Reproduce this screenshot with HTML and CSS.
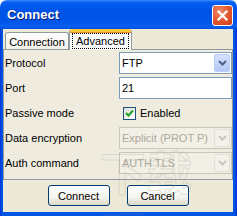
FILE: index.html
```html
<!DOCTYPE html>
<html>
<head>
<meta charset="utf-8">
<link rel="stylesheet" href="styles.css">
</head>
<body>
<div class="window">
  <div class="titlebar">
    <span class="title">Connect</span>
    <div class="close">
      <svg width="13" height="13" viewBox="0 0 13 13"><path d="M2.5 2.5 L10.5 10.5 M10.5 2.5 L2.5 10.5" stroke="#fff" stroke-width="2.2" stroke-linecap="square"/></svg>
    </div>
  </div>
  <div class="frame">
    <div class="client">
      <div class="tabs">
        <div class="tab">Connection</div>
        <div class="tab active"><span class="focus">Advanced</span></div>
      </div>
      <div class="panel">
        <div class="form">
          <span class="label">Protocol</span>
          <div class="combo"><span class="value">FTP</span><span class="arrow"><svg width="9" height="6" viewBox="0 0 9 6"><path d="M1 1 L4.5 4.5 L8 1" fill="none" stroke="#4D6185" stroke-width="2"/></svg></span></div>

          <span class="label">Port</span>
          <div class="input"><span class="value">21</span></div>

          <span class="label">Passive mode</span>
          <div class="check-row"><span class="checkbox"><svg width="11" height="11" viewBox="0 0 11 11"><path d="M2 5 L4.5 7.5 L9 2.5" fill="none" stroke="#21A121" stroke-width="2"/></svg></span><span class="check-text">Enabled</span></div>

          <span class="label">Data encryption</span>
          <div class="combo disabled"><span class="value">Explicit (PROT P)</span><span class="arrow"><svg width="9" height="6" viewBox="0 0 9 6"><path d="M1 1 L4.5 4.5 L8 1" fill="none" stroke="#C9C7BA" stroke-width="2"/></svg></span></div>

          <span class="label">Auth command</span>
          <div class="combo disabled"><span class="value">AUTH TLS</span><span class="arrow"><svg width="9" height="6" viewBox="0 0 9 6"><path d="M1 1 L4.5 4.5 L8 1" fill="none" stroke="#C9C7BA" stroke-width="2"/></svg></span></div>
        </div>
      </div>
      <div class="buttons">
        <div class="btn">Connect</div>
        <div class="btn">Cancel</div>
      </div>
    </div>
  </div>
  <div class="watermark">
    <span class="wm-big">下载吧</span>
    <span class="wm-url">www.xiazaiba.com</span>
  </div>
</div>
</body>
</html>
```

FILE: styles.css
```css
* { box-sizing: border-box; }
html, body { margin: 0; padding: 0; }
body {
  font-family: "Liberation Sans", Arial, sans-serif;
  font-size: 11px;
  color: #000;
  background: #fff;
}
.window {
  position: relative;
  width: 237px;
  height: 216px;
  display: flex;
  flex-direction: column;
  overflow: hidden;
}
.titlebar {
  height: 29px;
  flex: none;
  display: flex;
  align-items: flex-start;
  justify-content: space-between;
  padding: 5px 4px 0 7px;
  border-radius: 7px 7px 0 0;
  background: linear-gradient(to bottom, #3C8CF8 0px, #0A62F0 2px, #0058EE 5px, #0054E5 14px, #0056EA 22px, #0A5FF0 26px, #0050DE 29px);
}
.title {
  color: #fff;
  font-weight: bold;
  font-size: 13px;
  line-height: 20px;
  text-shadow: 1px 1px 0 #0A1E6E;
}
.close {
  width: 21px;
  height: 21px;
  border: 1px solid #fff;
  border-radius: 3px;
  background: radial-gradient(circle at 35% 30%, #F08A6A 0%, #E2552C 55%, #C83C18 100%);
  display: flex;
  align-items: center;
  justify-content: center;
}
.frame {
  flex: 1;
  display: flex;
  padding: 0 4px 4px 3px;
  background: linear-gradient(to right, #0831D9 0px, #0055E5 2px, #0055E5 234px, #0831D9 237px);
}
.client {
  flex: 1;
  background: #ECE9D8;
  display: flex;
  flex-direction: column;
}
.tabs {
  height: 20px;
  display: flex;
  align-items: flex-end;
  padding-left: 2px;
  position: relative;
  z-index: 1;
}
.tab {
  height: 17px;
  width: 64px;
  border: 1px solid #919B9C;
  border-bottom: none;
  border-radius: 3px 3px 0 0;
  background: linear-gradient(to bottom, #FFFFFF, #F3F1E9);
  display: flex;
  align-items: center;
  justify-content: center;
  padding-top: 1px;
}
.tab.active {
  height: 21px;
  width: 63px;
  margin-bottom: -1px;
  border-top: 3px solid #FFC83C;
  box-shadow: inset 0 1px 0 #E68B2C;
  background: #FCFCFE;
  padding-top: 0;
}
.focus {
  border: 1px dotted #000;
  height: 16px;
  width: 57px;
  display: flex;
  align-items: center;
  justify-content: center;
}
.panel {
  border: 1px solid #919B9C;
  background: #EFECDF;
  padding: 2px 0 5px 1px;
}
.form {
  display: grid;
  grid-template-columns: 114px 113px;
  grid-auto-rows: 22px;
  row-gap: 3px;
  align-items: center;
}
.combo, .input {
  height: 22px;
  background: #fff;
  border: 1px solid #7F9DB9;
  display: flex;
  align-items: center;
  justify-content: space-between;
  padding: 0 1px 0 2px;
}
.arrow {
  width: 16px;
  height: 18px;
  border: 1px solid #B9CDF9;
  border-radius: 2px;
  background: linear-gradient(to bottom, #D5E1FD, #B4C8F6);
  display: flex;
  align-items: center;
  justify-content: center;
}
.combo.disabled {
  background: #F2F0E6;
  border-color: #C9C7BA;
  color: #ACA899;
}
.combo.disabled .arrow {
  background: #F3F1EA;
  border-color: #E2E0D6;
}
.check-row {
  display: flex;
  align-items: center;
  padding-left: 4px;
  gap: 4px;
}
.checkbox {
  width: 13px;
  height: 13px;
  border: 1px solid #1C5180;
  background: linear-gradient(135deg, #DCDCD7, #FFFFFF);
  display: flex;
  align-items: center;
  justify-content: center;
}
.buttons {
  flex: 1;
  display: flex;
  justify-content: center;
  align-items: center;
  gap: 17px;
  padding-bottom: 1px;
}
.btn {
  width: 62px;
  height: 21px;
  border: 1px solid #003C74;
  border-radius: 3px;
  background: linear-gradient(to bottom, #FFFFFF 0%, #F4F3EE 60%, #DCD8C8 100%);
  display: flex;
  align-items: center;
  justify-content: center;
}
.watermark {
  position: absolute;
  left: 100px;
  top: 140px;
  width: 137px;
  height: 74px;
  pointer-events: none;
  display: flex;
  flex-direction: column;
  align-items: flex-end;
}
.wm-big {
  font-family: "Noto Sans CJK SC", sans-serif;
  font-size: 46px;
  line-height: 60px;
  font-weight: bold;
  color: transparent;
  -webkit-text-stroke: 1px rgba(150, 150, 140, 0.25);
  margin-right: 4px;
}
.wm-url {
  font-size: 10px;
  line-height: 11px;
  font-weight: bold;
  color: rgba(190, 188, 178, 0.5);
  margin-right: 12px;
}
```
